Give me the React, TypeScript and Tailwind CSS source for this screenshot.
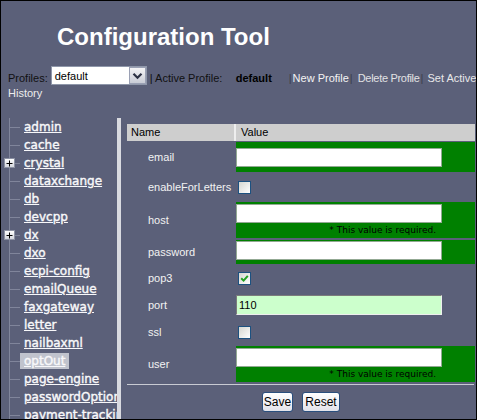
import React from "react";

const items = [
    { name: "admin" },
    { name: "cache" },
    { name: "crystal", plus: true },
    { name: "dataxchange" },
    { name: "db" },
    { name: "devcpp" },
    { name: "dx", plus: true },
    { name: "dxo" },
    { name: "ecpi-config" },
    { name: "emailQueue" },
    { name: "faxgateway" },
    { name: "letter" },
    { name: "nailbaxml" },
    { name: "optOut", active: true },
    { name: "page-engine" },
    { name: "passwordOptions" },
    { name: "payment-tracking" },
];

// Checkbox in the old XP look
function Check({ checked = false }: { checked?: boolean }) {
    return (
        <span className="ml-[2px] flex h-[13px] w-[13px] items-center justify-center border border-[#1c5180] bg-gradient-to-br from-[#d6d6d0] to-white">
            {checked && (
                <svg width="9" height="9" viewBox="0 0 9 9">
                    <path d="M1.2 4.2 L3.6 6.6 L7.8 1.8" fill="none" stroke="#21a121" strokeWidth="2" />
                </svg>
            )}
        </span>
    );
}

function TextInput() {
    return <div className="h-[19px] w-[206px] border border-[#93a993] bg-white" />;
}

function Required() {
    return (
        <div className="mt-[1px] w-[206px] pr-[6px] text-right font-['DejaVu_Sans',sans-serif] text-[9px] leading-[12px] text-black">
            * This value is required.
        </div>
    );
}

function Label({ children }: { children: React.ReactNode }) {
    return (
        <div className="flex w-[109px] shrink-0 items-center pl-[21px] text-[11px] text-[#f2f2f2]">
            {children}
        </div>
    );
}

function Sidebar() {
    return (
        <div className="h-[301px] w-[116px] shrink-0 overflow-hidden">
            {items.map((it) => (
                <div key={it.name} className="flex h-[18px] whitespace-nowrap">
                    {/* tree connector */}
                    <div className="relative h-full w-[19px] shrink-0 pl-[8px]">
                        <div className="flex h-full items-center border-l border-[#80859b]">
                            <div className="h-px w-[10px] bg-[#80859b]" />
                        </div>
                        {it.plus && (
                            <div className="absolute left-[3px] top-[4px] flex h-[10px] w-[11px] items-center justify-center border border-[#8d92a4] bg-gradient-to-b from-white to-[#d4d6de]">
                                <svg width="7" height="7" viewBox="0 0 7 7">
                                    <path d="M0.5 3.5 H6.5 M3.5 0.5 V6.5" stroke="#000" strokeWidth="1" />
                                </svg>
                            </div>
                        )}
                    </div>
                    <div className="flex items-center">
                        <span
                            className={
                                it.active
                                    ? "bg-[#c0c3cd] px-1 py-[1px] font-['DejaVu_Sans',sans-serif] text-[12px] leading-[14px] text-[#f8f8fa] underline [-webkit-text-stroke:0.4px_#f8f8fa]"
                                    : "px-1 py-[1px] font-['DejaVu_Sans',sans-serif] text-[12px] leading-[14px] text-[#f8f8fa] underline [-webkit-text-stroke:0.4px_#f8f8fa]"
                            }
                        >
                            {it.name}
                        </span>
                    </div>
                </div>
            ))}
        </div>
    );
}

export default function App() {
    return (
        <div className="h-[420px] w-[477px] overflow-hidden border border-black bg-[#5b6079] font-['Liberation_Sans',Arial,sans-serif]">
            {/* Title */}
            <h1 className="pl-[56px] pt-[22px] text-[24px] leading-[27px] font-bold text-white">
                Configuration Tool
            </h1>

            {/* Profiles bar */}
            <div className="mt-[16px] flex h-[19px] items-end whitespace-nowrap pl-[7px] text-[11px] leading-[14px]">
                <span className="shrink-0 text-[#111]">Profiles:</span>
                <div className="ml-[3px] flex h-[19px] w-[96px] shrink-0 items-center border border-[#8f97aa] bg-white">
                    <span className="flex-1 pl-[3px] pt-[1px] text-black">default</span>
                    <span className="flex h-[17px] w-[17px] items-center justify-center border border-[#9aa0b4] bg-gradient-to-b from-[#f4f4f6] to-[#c9ccd6]">
                        <svg width="11" height="8" viewBox="0 0 11 8">
                            <path d="M1.5 1.8 L5.5 5.8 L9.5 1.8" fill="none" stroke="#2c3144" strokeWidth="2.2" />
                        </svg>
                    </span>
                </div>
                <span className="ml-[3px] w-[86px] shrink-0 text-[#111]">| Active Profile:</span>
                <span className="w-[53px] shrink-0 font-bold text-black">default</span>
                <span className="mr-[1px] shrink-0 text-[#3c3f4c]">|</span>
                <span className="shrink-0 text-[#f4f4f4]">New Profile</span>
                <span className="ml-[1px] mr-[5px] shrink-0 text-[#3c3f4c]">|</span>
                <span className="shrink-0 tracking-[-0.3px] text-[#e2e2e4]">Delete Profile</span>
                <span className="ml-[1px] mr-[4px] shrink-0 text-[#3c3f4c]">|</span>
                <span className="shrink-0 text-[#e8e8ea]">Set Active</span>
            </div>
            <div className="mt-[1px] pl-[7px] text-[11px] leading-[14px] text-[#ececec]">History</div>

            {/* Body */}
            <div className="mt-[18px] flex">
                <Sidebar />
                <div className="h-[301px] w-[4px] shrink-0 bg-[#d9dae0]" />

                <div className="ml-[6px] mt-[6px] w-[348px] shrink-0">
                    {/* table header */}
                    <div className="flex h-[17px] text-[11px] leading-[17px] text-black">
                        <div className="w-[107px] bg-[#cecece] pl-[4px]">Name</div>
                        <div className="w-[2px] bg-[#eeeeee]" />
                        <div className="w-[239px] bg-[#cecece] pl-[5px]">Value</div>
                    </div>

                    {/* email */}
                    <div className="mt-[1px] flex h-[30px]">
                        <Label>email</Label>
                        <div className="w-[239px] bg-[#008000] pt-[6px]">
                            <TextInput />
                        </div>
                    </div>

                    {/* enableForLetters */}
                    <div className="flex h-[30px]">
                        <Label>enableForLetters</Label>
                        <div className="w-[239px] pt-[9px]">
                            <Check />
                        </div>
                    </div>

                    {/* host */}
                    <div className="flex h-[36px]">
                        <Label>host</Label>
                        <div className="w-[239px] bg-[#008000] pt-[2px]">
                            <TextInput />
                            <Required />
                        </div>
                    </div>

                    {/* password */}
                    <div className="mt-[2px] flex h-[24px]">
                        <Label>password</Label>
                        <div className="w-[239px] bg-[#008000] pt-[1px]">
                            <TextInput />
                        </div>
                    </div>

                    {/* pop3 */}
                    <div className="flex h-[28px]">
                        <Label>pop3</Label>
                        <div className="w-[239px] pt-[8px]">
                            <Check checked />
                        </div>
                    </div>

                    {/* port */}
                    <div className="flex h-[26px]">
                        <Label>port</Label>
                        <div className="w-[239px] pt-[3px]">
                            <div className="flex h-[20px] w-[206px] items-center border border-b-[#eeeeee] border-l-[#7c7c7c] border-r-[#eeeeee] border-t-[#7c7c7c] bg-[#ccffcc] pl-[2px] text-[11px] text-black">
                                110
                            </div>
                        </div>
                    </div>

                    {/* ssl */}
                    <div className="flex h-[28px]">
                        <Label>ssl</Label>
                        <div className="w-[239px] pt-[8px]">
                            <Check />
                        </div>
                    </div>

                    {/* user */}
                    <div className="flex h-[36px]">
                        <Label>user</Label>
                        <div className="w-[239px] bg-[#008000] pt-[2px]">
                            <TextInput />
                            <Required />
                        </div>
                    </div>

                    <div className="mt-[2px] h-px w-[347px] bg-[#c9cbd3]" />

                    <div className="mt-[7px] flex justify-center gap-[9px]">
                        <button className="h-[20px] w-[31px] rounded-[3px] border border-[#2a4f7e] bg-gradient-to-b from-white to-[#e3e3ea] text-[12px] leading-[18px] text-black">
                            Save
                        </button>
                        <button className="h-[20px] w-[38px] rounded-[3px] border border-[#2a4f7e] bg-gradient-to-b from-white to-[#e3e3ea] text-[12px] leading-[18px] text-black">
                            Reset
                        </button>
                    </div>
                </div>
            </div>
        </div>
    );
}
